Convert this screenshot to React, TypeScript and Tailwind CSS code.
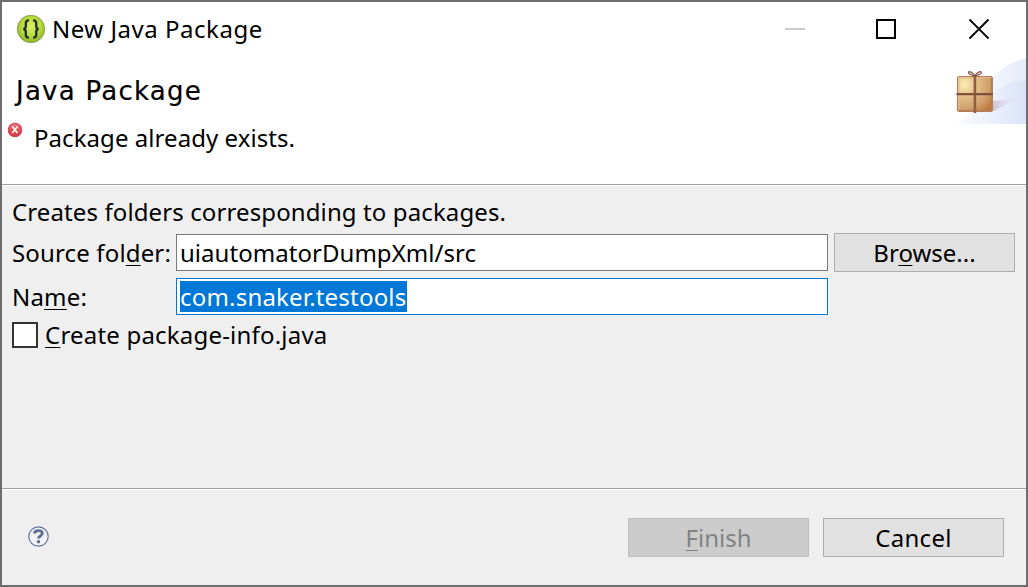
import type { ReactNode } from "react";

function U({ children }: { children: ReactNode }) {
  return <span className="underline decoration-1 underline-offset-[3px] [text-decoration-skip-ink:none]">{children}</span>;
}

function AppIcon() {
  return (
    <svg width="30" height="30" viewBox="0 0 30 30">
      <defs>
        <radialGradient id="lime" cx="0.5" cy="0.42" r="0.6">
          <stop offset="0" stopColor="#d9ee68" />
          <stop offset="0.6" stopColor="#b4db38" />
          <stop offset="1" stopColor="#88ad24" />
        </radialGradient>
      </defs>
      <circle cx="15" cy="15" r="13.7" fill="url(#lime)" stroke="#8a9c55" strokeWidth="0.9" />
      <path d="M12.8 6.500C10.400 6.300 9.800 7.500 9.800 9.300v2.700c0 1.800-.6 2.700-2.300 3 1.700.3 2.300 1.200 2.300 3v2.700c0 1.800.6 3 3 2.800M17.200 6.500c2.400-.2 3 1 3 2.800v2.700c0 1.800.6 2.700 2.300 3-1.700.3-2.300 1.200-2.300 3v2.700c0 1.800-.6 3-3 2.800" fill="none" stroke="#252a32" strokeWidth="2.300" />
    </svg>
  );
}

function ErrorIcon() {
  return (
    <svg width="16" height="16" viewBox="0 0 15 15" className="mt-px shrink-0">
      <defs>
        <linearGradient id="err" x1="0" y1="0" x2="0" y2="1">
          <stop offset="0" stopColor="#e87a80" />
          <stop offset="0.5" stopColor="#e2505b" />
          <stop offset="1" stopColor="#d63547" />
        </linearGradient>
      </defs>
      <circle cx="7.500" cy="7.500" r="6.300" fill="url(#err)" stroke="#d04453" />
      <path d="M5 4.300l4.800 6M9.800 4.300l-4.800 6" stroke="#fff" strokeWidth="1.500" />
    </svg>
  );
}

function PackageBanner() {
  return (
    <svg width="76" height="70" viewBox="950 56 76 70" className="block">
      <defs>
        <linearGradient id="sky" x1="0" y1="0" x2="1" y2="0">
          <stop offset="0" stopColor="#fff" />
          <stop offset="0.5" stopColor="#f3f6fd" />
          <stop offset="1" stopColor="#e5ebf9" />
        </linearGradient>
        <linearGradient id="hill" x1="0" y1="0" x2="1" y2="0">
          <stop offset="0" stopColor="#fff" />
          <stop offset="0.5" stopColor="#edf1fc" />
          <stop offset="1" stopColor="#dbe3f7" />
        </linearGradient>
        <linearGradient id="shade" x1="0" y1="0" x2="1" y2="0">
          <stop offset="0" stopColor="#b7a6bb" stopOpacity="0.6" />
          <stop offset="1" stopColor="#d8d9f0" stopOpacity="0" />
        </linearGradient>
        <radialGradient id="box" cx="0.2" cy="0.22" r="1">
          <stop offset="0" stopColor="#fbf0b6" />
          <stop offset="0.3" stopColor="#e6c58d" />
          <stop offset="0.7" stopColor="#d1a06a" />
          <stop offset="1" stopColor="#bd7739" />
        </radialGradient>
      </defs>
      <path d="M952 124C982 118 976 70 1026 58V124Z" fill="url(#sky)" />
      <path d="M950 124C986 119 982 84 1026 79.500V124Z" fill="url(#hill)" />
      <path d="M993 101Q1005 100 1017 97.500Q1004 106 993 111.500Z" fill="url(#shade)" />
      <rect x="957.500" y="76.500" width="35" height="35" rx="1.500" fill="url(#box)" stroke="#b87d5e" />
      <path d="M959 78H991M959 78V110" stroke="#e2bb91" strokeWidth="1" fill="none" />
      <path d="M991.500 78V110.500H959" stroke="#b77e4d" strokeWidth="1" fill="none" />
      <path d="M974.900 76V113" stroke="#925c49" strokeWidth="2.600" />
      <path d="M956.500 94.200H993" stroke="#80513f" strokeWidth="2.300" />
      <path d="M974.800 76c-2-3.800-6.300-5.300-6.300-3.600 0 1.800 3.300 2.900 6.300 3.600 2-3.800 6.500-5.300 6.500-3.600 0 1.800-3.500 2.900-6.500 3.600" fill="none" stroke="#80513f" strokeWidth="1.200" />
    </svg>
  );
}

export default function App() {
  return (
    <div className="flex h-[587px] w-[1028px] flex-col overflow-hidden border-2 border-[#6e6e6e] bg-[#efefef] font-['Noto_Sans',sans-serif] text-[24px] leading-[34px] whitespace-nowrap text-black">
      <header className="h-[182px] shrink-0 bg-white">
        <div className="flex h-[54px] items-center justify-between pl-[14px]">
          <div className="flex items-center gap-[6px]">
            <AppIcon />
            <h1 className="tracking-[0.52px]">New Java Package</h1>
          </div>
          <svg width="242" height="54" viewBox="784 2 242 54" fill="none">
            <path d="M785 29H805" stroke="#ccc" strokeWidth="2" />
            <rect x="877" y="20" width="18" height="18" stroke="#000" strokeWidth="2" />
            <path d="M969.500 19.500L988.500 38.500M988.500 19.500L969.500 38.500" stroke="#000" strokeWidth="1.800" />
          </svg>
        </div>
        <div className="flex justify-between">
          <div>
            <h2 className="h-[51px] pt-[18px] pl-[14px] font-['DejaVu_Sans',sans-serif] text-[26px] tracking-[1.25px] [-webkit-text-stroke:0.2px_black]">Java Package</h2>
            <div className="flex pt-[14px] pl-[5px]">
              <ErrorIcon />
              <p className="pl-[11px] tracking-[0.06px]">Package already exists.</p>
            </div>
          </div>
          <PackageBanner />
        </div>
      </header>
      <main className="h-[304px] shrink-0 border-t border-[#a0a0a0]">
        <div className="border-t border-white px-[10px] pt-[9px]">
          <p className="h-[38px] tracking-[0.11px]">Creates folders corresponding to packages.</p>
          <div className="flex h-[38px]">
            <label className="w-[164px] pt-[3px] tracking-[0.15px]">Source fol<U>d</U>er:</label>
            <div className="mt-px flex h-[37px] w-[652px] items-center border border-[#7a7a7a] bg-white pl-[3px] tracking-[0.04px]">uiautomatorDumpXml/src</div>
            <button className="ml-[6px] h-[39px] w-[181px] border border-[#adadad] bg-[#e1e1e1]">Br<U>o</U>wse...</button>
          </div>
          <div className="mt-[7px] flex h-[37px]">
            <label className="w-[164px] pt-[2px] tracking-[0.2px]">Na<U>m</U>e:</label>
            <div className="flex w-[652px] items-center border border-[#0078d7] bg-white pl-[3px]">
              <span className="h-[31px] w-[227px] bg-[#0078d7] leading-[31px] tracking-[0.2px] text-white">com.snaker.testools</span>
            </div>
          </div>
          <label className="mt-[3px] flex h-[34px] items-center gap-[7px]">
            <span className="h-[26px] w-[26px] border-2 border-[#333] bg-white" />
            <span className="tracking-[0.2px]"><U>C</U>reate package-info.java</span>
          </label>
        </div>
      </main>
      <footer className="flex flex-1 border-t border-[#a0a0a0]">
        <div className="flex flex-1 items-start border-t border-white pt-[28px] pr-[22px] pl-[26px]">
          <svg width="22" height="22" viewBox="0 0 22 22" className="mt-[8px] mr-auto">
            <circle cx="10.500" cy="10.500" r="9.700" fill="#f3f3f3" stroke="#60749b" strokeWidth="1.200" />
            <path d="M6.400 7.400C7 3.600 14.300 3.700 14.300 7.300c0 2.800-3.800 2.600-3.800 5.300" fill="none" stroke="#5b6f96" strokeWidth="2.900" />
            <circle cx="10.500" cy="15.700" r="1.700" fill="#5b6f96" />
          </svg>
          <button className="h-[39px] w-[181px] border border-[#bfbfbf] bg-[#ccc] text-[#838383]"><U>F</U>inish</button>
          <button className="ml-[14px] h-[39px] w-[181px] border border-[#adadad] bg-[#e1e1e1] tracking-[0.3px]">Cancel</button>
        </div>
      </footer>
    </div>
  );
}
